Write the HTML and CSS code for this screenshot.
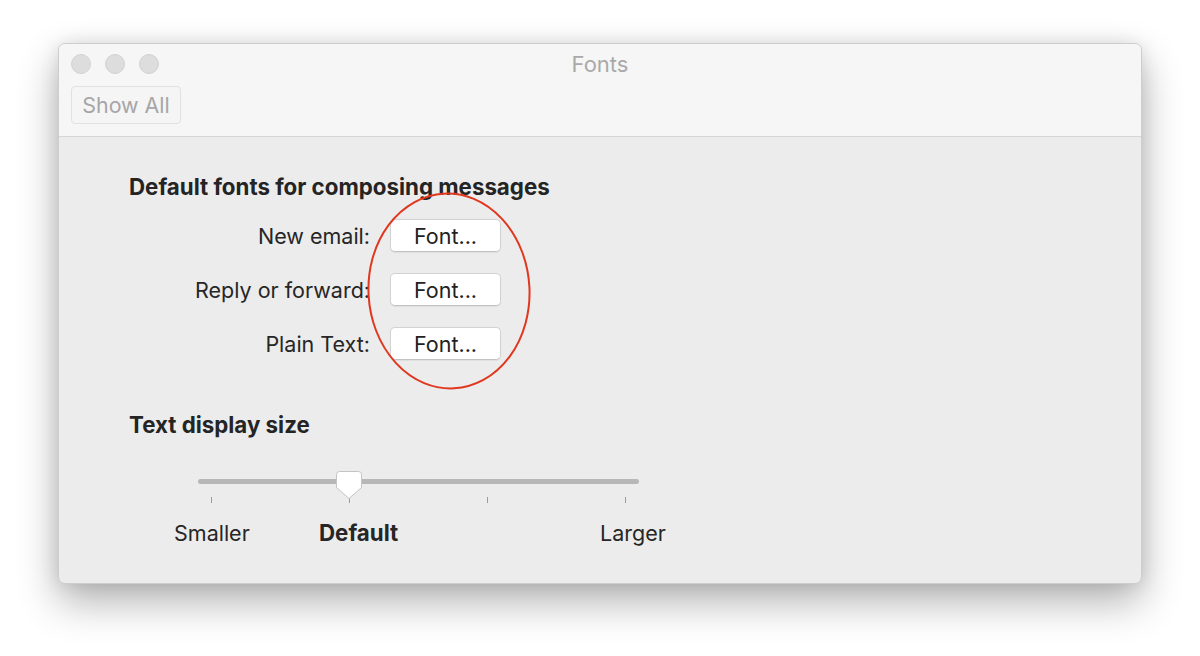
FILE: index.html
```html
<!DOCTYPE html>
<html lang="en">
<head>
<meta charset="utf-8">
<title>Fonts</title>
<link rel="stylesheet" href="styles.css">
</head>
<body>
<div class="window">
  <div class="titlebar">
    <div class="titlerow">
      <div class="lights">
        <span class="light"></span>
        <span class="light"></span>
        <span class="light"></span>
      </div>
      <div class="title">Fonts</div>
      <div class="spacer"></div>
    </div>
    <div class="toolbar">
      <button class="showall" type="button">Show All</button>
    </div>
  </div>
  <div class="content">
    <h2 class="heading">Default fonts for composing messages</h2>
    <div class="formgrid">
      <label class="label">New email:</label>
      <button class="fontbtn" type="button">Font...</button>
      <label class="label">Reply or forward:</label>
      <button class="fontbtn" type="button">Font...</button>
      <label class="label">Plain Text:</label>
      <button class="fontbtn" type="button">Font...</button>
    </div>
    <h2 class="heading heading-size">Text display size</h2>
    <div class="slider">
      <div class="track"></div>
      <svg class="thumb" width="28" height="30" viewBox="0 0 28 30">
        <path d="M4.5 1.5 H23.5 A3 3 0 0 1 26.5 4.5 V17.5 L14 28.5 L1.5 17.5 V4.5 A3 3 0 0 1 4.5 1.5 Z" fill="#ffffff" stroke="#c4c4c4" stroke-width="1"/>
      </svg>
    </div>
    <div class="ticks">
      <span class="tick"></span>
      <span class="tick"></span>
      <span class="tick"></span>
      <span class="tick"></span>
    </div>
    <div class="sizelabels">
      <span class="sizelabel">Smaller</span>
      <span class="sizelabel sizelabel-current">Default</span>
      <span class="sizelabel">Larger</span>
    </div>
  </div>
  <svg class="annotation" width="180" height="214" viewBox="0 0 180 214">
    <ellipse cx="88" cy="106" rx="80.5" ry="97.5" transform="rotate(-3 88 106)" fill="none" stroke="#e0371f" stroke-width="2"/>
  </svg>
</div>
</body>
</html>
```

FILE: styles.css
```css
* {
  box-sizing: border-box;
}

html, body {
  margin: 0;
  background: #ffffff;
}

body {
  min-height: 100vh;
  padding: 43px 0 0 58px;
  font-family: "Inter", "Liberation Sans", sans-serif;
  color: #242424;
}

.window {
  position: relative;
  width: 1084px;
  height: 541px;
  border: 1px solid #cdcdcd;
  border-radius: 7px;
  background: #ececec;
  box-shadow: 0 18px 40px rgba(0, 0, 0, 0.3), 0 0 18px rgba(0, 0, 0, 0.1);
  overflow: hidden;
}

.titlebar {
  height: 93px;
  padding: 9px 12px 12px 12px;
  background: #f6f6f6;
  border-bottom: 1px solid #d6d6d6;
  display: flex;
  flex-direction: column;
  gap: 13px;
}

.titlerow {
  display: grid;
  grid-template-columns: 1fr auto 1fr;
  align-items: center;
  height: 20px;
}

.lights {
  display: flex;
  gap: 14px;
}

.light {
  width: 20px;
  height: 20px;
  border-radius: 50%;
  background: #dddddd;
  border: 1px solid #d2d2d2;
}

.title {
  font-size: 22px;
  line-height: 22px;
  color: #a9a9a9;
}

.toolbar {
  display: flex;
}

.showall {
  width: 110px;
  height: 38px;
  border: 1px solid #e1e1e1;
  border-radius: 4px;
  background: #f5f5f5;
  color: #a6a6a6;
  font-family: inherit;
  font-size: 21.4px;
  padding: 0;
}

.content {
  padding: 38px 0 0 70px;
}

.heading {
  margin: 0;
  font-size: 22.3px;
  line-height: 24px;
  font-weight: 700;
  color: #242424;
}

.heading-size {
  margin-top: 53px;
}

.formgrid {
  margin-top: 20px;
  display: grid;
  grid-template-columns: 241px 111px;
  grid-auto-rows: 33px;
  column-gap: 20px;
  row-gap: 21px;
  align-items: center;
}

.label {
  text-align: right;
  font-size: 21.5px;
  line-height: 24px;
  color: #262626;
}

.fontbtn {
  height: 33px;
  width: 111px;
  border: 1px solid #d2d2d2;
  border-bottom-color: #c2c2c2;
  border-radius: 5px;
  background: #ffffff;
  box-shadow: 0 1px 1px rgba(0, 0, 0, 0.06);
  font-family: inherit;
  font-size: 21.5px;
  color: #222222;
  padding: 0;
}

.slider {
  position: relative;
  margin: 34px 0 0 69px;
  padding-top: 8px;
  width: 441px;
  height: 26px;
}

.track {
  height: 5px;
  border-radius: 3px;
  background: #b7b7b7;
}

.thumb {
  position: absolute;
  left: 137px;
  top: -1px;
  z-index: 2;
}

.ticks {
  margin-left: 69px;
  width: 441px;
  padding: 0 13px;
  height: 6px;
  display: flex;
  justify-content: space-between;
}

.tick {
  width: 1px;
  height: 6px;
  background: #9c9c9c;
}

.sizelabels {
  margin: 18px 0 0 45px;
  display: grid;
  grid-template-columns: 145px 281px auto;
  font-size: 21.5px;
  line-height: 24px;
  color: #262626;
}

.sizelabel-current {
  font-weight: 700;
  font-size: 22.3px;
}

.annotation {
  position: absolute;
  left: 302px;
  top: 141px;
  z-index: 3;
}
```
